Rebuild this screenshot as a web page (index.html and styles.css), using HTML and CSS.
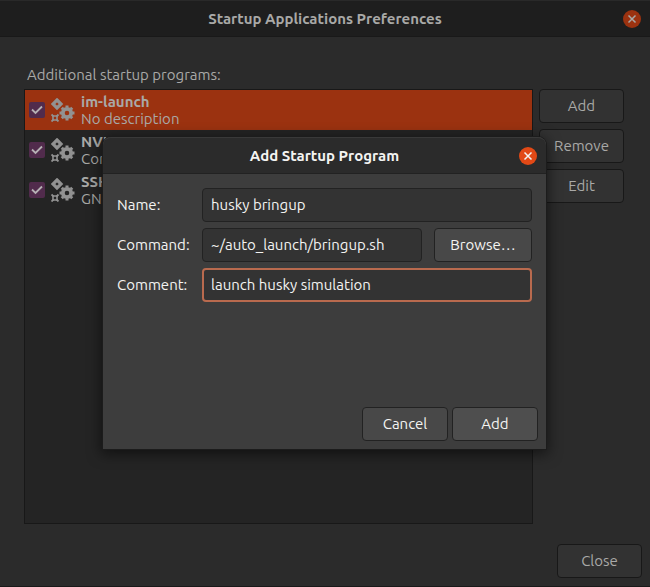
FILE: index.html
```html
<!DOCTYPE html>
<html lang="en">
<head>
<meta charset="utf-8">
<meta name="viewport" content="width=device-width, initial-scale=1">
<title>Startup Applications Preferences</title>
<link rel="stylesheet" href="styles.css">
</head>
<body>
<svg class="symbols" aria-hidden="true">
  <symbol id="gears" viewBox="0 0 24 24">
    <g fill="none" stroke="#929292">
      <path d="M6 2l4 4-4 4-4-4z" stroke-width="3.200"/>
      <circle cx="16" cy="15" r="4.200" stroke-width="3.800"/>
      <path d="M16 7.500v2M16 20.500v2M8.500 15h2M21.500 15h2M10.800 9.800l1.400 1.400M19.800 18.800l1.400 1.400M10.800 20.200l1.400-1.400M19.800 11.200l1.400-1.400" stroke-width="3"/>
      <path d="M2 18h4v4H2z" stroke-width="1.600"/>
      <path d="M.5 16.500l2 2M5.500 21.500l2 2M.5 23.500l2-2M5.500 18.500l2-2" stroke-width="1.800"/>
    </g>
  </symbol>
  <symbol id="cross" viewBox="0 0 18 18">
    <path d="M5.500 5.500l7 7M12.500 5.500l-7 7" fill="none" stroke="currentColor" stroke-width="1.500"/>
  </symbol>
  <symbol id="tick" viewBox="0 0 16 16">
    <path d="M3 7.500l3.500 3.500L13 4.500" fill="none" stroke="currentColor" stroke-width="1.800"/>
  </symbol>
</svg>
<main class="window">
  <header class="titlebar">
    <h1 class="title">Startup Applications Preferences</h1>
    <button class="close" type="button" aria-label="Close window"><svg><use href="#cross"/></svg></button>
  </header>
  <div class="content">
    <h2 class="caption">Additional startup programs:</h2>
    <div class="columns">
      <ul class="programs">
        <li class="program selected">
          <span class="check"><input type="checkbox" id="p1" checked><svg><use href="#tick"/></svg></span>
          <svg class="gears"><use href="#gears"/></svg>
          <label class="text" for="p1"><b>im-launch</b><span>No description</span></label>
        </li>
        <li class="program">
          <span class="check"><input type="checkbox" id="p2" checked><svg><use href="#tick"/></svg></span>
          <svg class="gears"><use href="#gears"/></svg>
          <label class="text" for="p2"><b>NVIDIA X Server Settings</b><span>Configure NVIDIA X Server Settings</span></label>
        </li>
        <li class="program">
          <span class="check"><input type="checkbox" id="p3" checked><svg><use href="#tick"/></svg></span>
          <svg class="gears"><use href="#gears"/></svg>
          <label class="text" for="p3"><b>SSH Key Agent</b><span>GNOME Keyring: SSH Agent</span></label>
        </li>
      </ul>
      <div class="actions">
        <button class="button" type="button">Add</button>
        <button class="button" type="button">Remove</button>
        <button class="button" type="button">Edit</button>
      </div>
    </div>
  </div>
  <footer class="footer"><button class="button" type="button">Close</button></footer>
</main>
<form class="dialog" role="dialog" aria-labelledby="dialog-title">
  <header class="titlebar">
    <h2 class="title" id="dialog-title">Add Startup Program</h2>
    <button class="close" type="button" aria-label="Close dialog"><svg><use href="#cross"/></svg></button>
  </header>
  <div class="fields">
    <label for="name">Name:</label>
    <input class="entry" id="name" type="text" value="husky bringup">
    <label for="command">Command:</label>
    <div class="pair">
      <input class="entry" id="command" type="text" value="~/auto_launch/bringup.sh">
      <button class="button browse" type="button">Browse…</button>
    </div>
    <label for="comment">Comment:</label>
    <input class="entry active" id="comment" type="text" value="launch husky simulation">
  </div>
  <div class="choices">
    <button class="button" type="button">Cancel</button>
    <button class="button suggested" type="submit">Add</button>
  </div>
</form>
</body>
</html>
```
FILE: styles.css
```css
* {
  box-sizing: border-box;
}

body {
  margin: 0;
  background: #2b2b2b;
  color: #a9a9a7;
  font: 15px/17px Ubuntu, "Noto Sans", sans-serif;
}

h1, h2, ul {
  margin: 0;
  padding: 0;
  font: inherit;
}

input, button {
  margin: 0;
  font: inherit;
  color: inherit;
}

.symbols {
  position: absolute;
  width: 0;
  height: 0;
}

.window {
  display: flex;
  flex-direction: column;
  min-height: 100vh;
  border-bottom: 1px solid #191919;
}

.titlebar {
  display: grid;
  grid-template-columns: 18px 1fr 18px;
  align-items: center;
  height: 37px;
  padding: 0 9px;
  background: #1e1e1e;
  border-top: 1px solid #292929;
  border-bottom: 1px solid #191919;
}

.title {
  grid-column: 2;
  font-weight: 700;
  text-align: center;
}

.close {
  width: 18px;
  height: 18px;
  padding: 0;
  border: 0;
  border-radius: 50%;
  background: #9b3210;
}

.close svg {
  display: block;
  width: 18px;
  height: 18px;
}

.content {
  display: flex;
  flex: 1;
  flex-direction: column;
  gap: 6px;
  padding: 29px 26px 20px 24px;
}

.caption {
  padding-left: 3px;
}

.columns {
  display: flex;
  flex: 1;
  gap: 6px;
}

.programs {
  flex: 1;
  list-style: none;
  background: #242424;
  border: 1px solid #181818;
}

.program {
  display: flex;
  align-items: center;
  height: 40px;
  padding-left: 4px;
  overflow: hidden;
  white-space: nowrap;
}

.selected {
  background: #9b3210;
}

.check {
  display: grid;
  width: 16px;
  height: 16px;
  color: #b5b0b4;
}

.check input {
  grid-area: 1 / 1;
  appearance: none;
  border-radius: 2px;
  background: #512b4c;
}

.check svg {
  grid-area: 1 / 1;
  width: 16px;
  height: 16px;
  pointer-events: none;
}

.check input:not(:checked) + svg {
  visibility: hidden;
}

.gears {
  width: 24px;
  height: 24px;
  margin: 0 6px;
}

.text b, .text span {
  display: block;
}

.actions {
  display: flex;
  flex-direction: column;
  gap: 6px;
}

.button {
  min-width: 85px;
  height: 34px;
  padding: 0 14px 2px;
  border: 1px solid #181818;
  border-radius: 4px;
  background: #323232;
}

.footer {
  display: flex;
  justify-content: flex-end;
  padding: 0 8px 8px;
}

.dialog {
  position: absolute;
  top: 137px;
  right: 104px;
  left: 103px;
  display: flex;
  flex-direction: column;
  min-height: 312px;
  border-radius: 8px 8px 0 0;
  background: #3d3d3d;
  box-shadow: 0 0 0 1px #1c1c1c, 0 3px 14px 2px #0008;
  color: #f4f4f2;
}

.dialog .titlebar {
  background: #2b2b2b;
  border-top-color: #393939;
  border-bottom-color: #222;
  border-radius: 8px 8px 0 0;
}

.dialog .close {
  background: #e24916;
}

.dialog .button {
  min-width: 86px;
  background: #484848;
  border-color: #222;
}

.dialog .suggested {
  background: #4e4e4e;
}

.fields {
  display: grid;
  grid-template-columns: 73px 1fr;
  align-items: center;
  gap: 6px 12px;
  padding: 14px 14px 0;
}

.fields label {
  padding-bottom: 2px;
}

.pair {
  display: flex;
  gap: 12px;
}

.entry {
  width: 100%;
  min-width: 0;
  height: 34px;
  padding: 0 8px 2px;
  border: 1px solid #222;
  border-radius: 4px;
  background: #333;
  outline: 0;
}

.active {
  padding: 0 7px 2px;
  border: 2px solid #b96a4e;
}

.dialog .browse {
  flex: 0 0 98px;
}

.choices {
  display: flex;
  justify-content: flex-end;
  gap: 4px;
  margin-top: auto;
  padding: 8px;
}
```
